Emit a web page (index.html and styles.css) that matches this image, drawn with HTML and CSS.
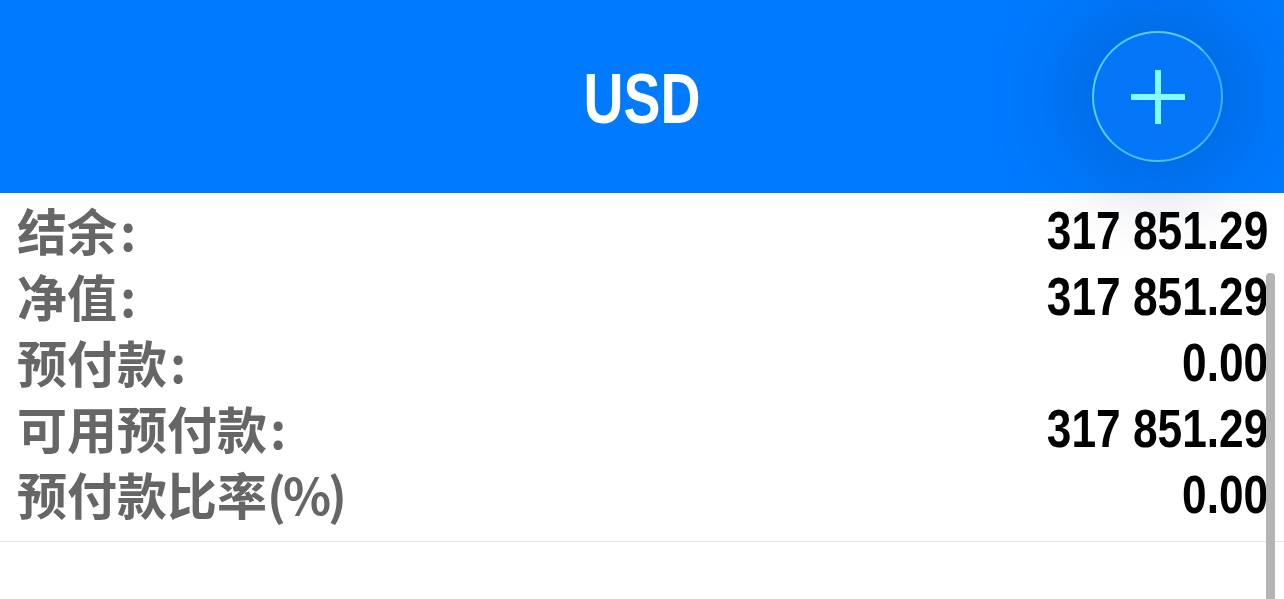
FILE: index.html
```html
<!DOCTYPE html>
<html lang="zh">
<head>
<meta charset="utf-8">
<title>USD</title>
<link rel="stylesheet" href="styles.css">
</head>
<body>
<header class="topbar">
  <h1 class="title">USD</h1>
  <button class="add-btn" aria-label="add">
    <svg width="56" height="56" viewBox="0 0 56 56"><path d="M28 1V55M1 28H55" stroke="#84fbff" stroke-width="6" fill="none"/></svg>
  </button>
</header>
<main class="content">
  <div class="rows">
    <div class="row"><span class="label">结余<span class="colon">:</span></span><span class="value">317 851.29</span></div>
    <div class="row"><span class="label">净值<span class="colon">:</span></span><span class="value">317 851.29</span></div>
    <div class="row"><span class="label">预付款<span class="colon">:</span></span><span class="value">0.00</span></div>
    <div class="row"><span class="label">可用预付款<span class="colon">:</span></span><span class="value">317 851.29</span></div>
    <div class="row"><span class="label">预付款比率<span class="latin">(%)</span></span><span class="value">0.00</span></div>
  </div>
  <div class="scrollbar"></div>
</main>
</body>
</html>
```
FILE: styles.css
```css
html, body { margin: 0; padding: 0; background: #fff; }
body { width: 1284px; height: 599px; overflow: hidden; font-family: "Liberation Sans", sans-serif; }

.topbar {
  position: relative;
  height: 193px;
  background: #007aff;
  display: flex;
  align-items: center;
  justify-content: center;
}
.title {
  margin: 0;
  color: #fff;
  font-family: "Liberation Sans", sans-serif;
  font-weight: 700;
  font-size: 71px;
  line-height: 1;
  padding-top: 4px;
  transform: scaleX(0.78);
}
.add-btn {
  position: absolute;
  left: 1092px;
  top: 31px;
  width: 131px;
  height: 131px;
  border-radius: 50%;
  border: 2px solid rgba(110, 218, 255, 0.85);
  border-right-color: rgba(110, 218, 255, 0.6);
  border-bottom-color: rgba(110, 218, 255, 0.75);
  background: #0477f8;
  box-shadow: 0 0 70px 35px rgba(10, 40, 90, 0.16);
  display: flex;
  align-items: center;
  justify-content: center;
  padding: 0;
  z-index: 2;
}

.content {
  position: relative;
  height: 406px;
  background: #fff;
}
.rows {
  padding: 3px 16px 15px 17px;
  border-bottom: 1px solid #e2e2e2;
}
.row {
  height: 66px;
  display: flex;
  align-items: center;
  justify-content: space-between;
}
.label {
  font-family: "Noto Sans CJK SC", sans-serif;
  font-weight: 700;
  font-size: 50px;
  color: #666;
}
.colon {
  margin-left: 3px;
}
.latin {
  letter-spacing: -3px;
}
.value {
  display: inline-block;
  font-family: "Liberation Sans", sans-serif;
  font-weight: 700;
  font-size: 53px;
  color: #000;
  padding-top: 2px;
  transform: scaleX(0.835);
  transform-origin: right center;
}
.scrollbar {
  position: absolute;
  left: 1266px;
  top: 80px;
  width: 9px;
  bottom: 0;
  background: #b4b4b4;
  border-radius: 4px 4px 0 0;
}
```
